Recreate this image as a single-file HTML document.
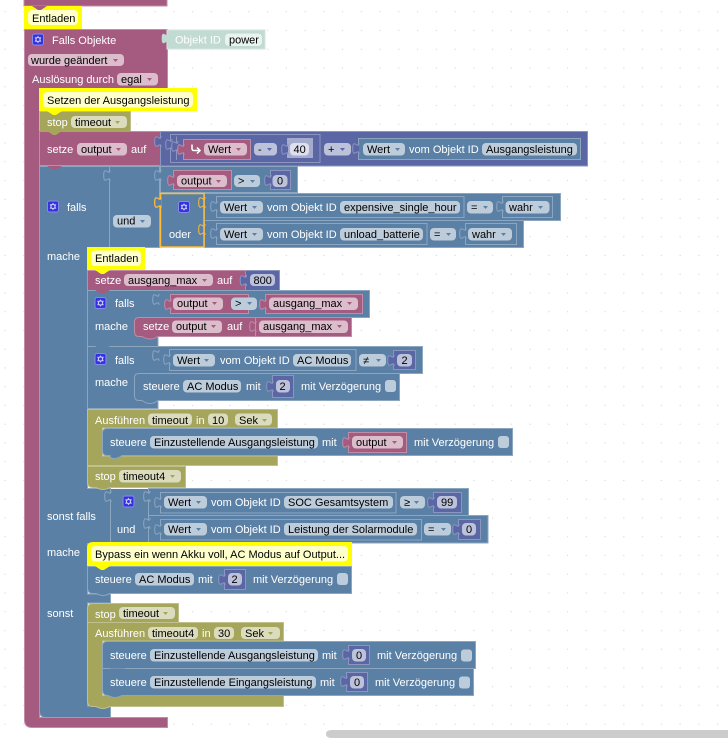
<!DOCTYPE html>
<html><head><meta charset="utf-8"><style>
html,body{margin:0;padding:0;background:#fff;width:728px;height:738px;overflow:hidden}
svg{display:block}
text{font:11px "Liberation Sans",sans-serif;fill:#000}
text.w{fill:#fff}
.p{fill:#a55b80;stroke:#c08ca6}.b{fill:#5b80a5;stroke:#8ca6c0}.o{fill:#a5a55b;stroke:#c0c08c}.m{fill:#5b67a5;stroke:#8c95c0}
.pn{fill:#a55b80}.bn{fill:#5b80a5}.on{fill:#a5a55b}.yn{fill:#ff0}.mn{fill:#5b67a5}
.fp{fill:#dbbdcc}.fb{fill:#bdccdb}.fo{fill:#dbdbbd}.fm{fill:#bdc2db}
.ap{fill:#a55b80}.ab{fill:#5b80a5}.ao{fill:#a5a55b}
</style></head><body>
<svg width="728" height="738" viewBox="0 0 728 738" xmlns="http://www.w3.org/2000/svg">
<defs>
<pattern id="dots" width="18.75" height="18.75" patternUnits="userSpaceOnUse"><rect x="4.6" y="11.2" width="1" height="1" fill="#ccc"/></pattern>
<g id="gear"><rect x=".5" y=".5" width="11" height="11" rx="2" fill="#3333dd" stroke="#8888ee"/><path d="M6 2.200l1.200 1.700 2.100-.1-.9 2.200.9 2.200-2.100-.1L6 9.800 4.800 8.100l-2.100.1.9-2.200-.9-2.200 2.100.1z" fill="#ccccf5"/><circle cx="6" cy="6" r="1.500" fill="#3333dd"/></g>
<path id="tab" d="M1 11c0-7-6.300 5.500-6.300-5.500s6.300 1.500 6.300-5.500"/>
<path id="notch" d="M0 0l6 4h3l6-4z"/>
<path id="dn" d="M0 0h5l-2.500 3z"/>
</defs>
<rect width="728" height="738" fill="#fff"/>
<rect width="728" height="738" fill="url(#dots)"/>

<!-- top stub -->
<rect class="p" x="24" y="-5" width="143" height="11"/>

<!-- main pink -->
<path class="p" d="M24.500 29.500H167.500V88.500H39.500V717.500H167.500V727.500H32q-7.500 0-7.500-7.500Z"/>

<!-- Objekt ID -->
<rect x="167" y="30" width="98" height="19" fill="#c1dad2" stroke="#d5e6e0"/>
<use href="#tab" x="167" y="33" fill="#c1dad2"/>
<text class="w" x="175" y="43.500">Objekt ID</text>
<rect x="225" y="33.500" width="37" height="12.500" rx="4" fill="#e9f3ef"/>
<text x="229" y="43.500">power</text>

<use href="#gear" x="32" y="33.500"/>
<text class="w" x="52" y="44">Falls Objekte</text>
<rect class="fp" x="28" y="54" width="96" height="12" rx="4"/>
<text x="31" y="64">wurde geändert</text><use href="#dn" x="113" y="59" class="ap"/>
<text class="w" x="32" y="83">Auslösung durch</text>
<rect class="fp" x="117" y="73" width="41" height="12.500" rx="4"/>
<text x="121" y="83">egal</text><use href="#dn" x="147" y="78" class="ap"/>

<!-- Entladen comment -->
<rect x="24" y="6" width="58" height="23" fill="#ff0"/>
<rect x="28" y="10" width="50" height="15" rx="4" fill="#ffc"/>
<text x="32" y="22">Entladen</text>
<use href="#notch" x="32" y="6" class="pn"/>

<!-- Setzen -->
<rect x="39" y="88" width="158" height="23" fill="#ff0"/>
<rect x="43" y="92" width="150" height="15.500" rx="4" fill="#ffc"/>
<text x="47" y="104">Setzen der Ausgangsleistung</text>

<!-- stop timeout -->
<rect class="o" x="39.500" y="111.500" width="91" height="20"/>
<text class="w" x="47" y="126">stop</text>
<rect class="fo" x="71" y="116" width="56" height="12" rx="4"/>
<text x="75" y="126">timeout</text><use href="#dn" x="115" y="121" class="ao"/>
<use href="#notch" x="47" y="111" class="yn"/>

<!-- setze output auf -->
<rect class="p" x="39.500" y="131.500" width="121" height="34"/>
<text class="w" x="47" y="153">setze</text>
<rect class="fp" x="77" y="143" width="50" height="12.500" rx="4"/>
<text x="81" y="153">output</text><use href="#dn" x="116" y="148" class="ap"/>
<text class="w" x="131" y="153">auf</text>
<use href="#notch" x="47" y="131" class="on"/>
<rect class="m" x="160.500" y="131.500" width="427" height="34.500"/>
<use href="#tab" x="160" y="136" class="m"/>
<rect class="m" x="170.500" y="134.500" width="149.500" height="28"/>
<use href="#tab" x="171" y="139" class="m"/>
<path d="M176.500 136.500V160" fill="none" stroke="#8c95c0"/>
<use href="#tab" x="177" y="141" class="m"/>
<rect class="p" x="183.500" y="139.500" width="67" height="20"/>
<use href="#tab" x="183" y="144" class="p"/>
<path d="M192 144.500v4q0 2 2 2h6m-3-3l3 3-3 3" fill="none" stroke="#fff" stroke-width="1.500"/>
<rect class="fp" x="204" y="143" width="43" height="12.500" rx="4"/>
<text x="208" y="153">Wert</text><use href="#dn" x="236" y="148" class="ap"/>
<rect class="fm" x="254" y="143" width="23" height="12.500" rx="4"/>
<text x="258" y="153">-</text><use href="#dn" x="267" y="148" class="mn"/>
<rect x="287" y="138" width="26" height="20" class="fm" opacity=".75"/>
<use href="#tab" x="287" y="144" class="m"/>
<rect x="290" y="143" width="19" height="12.500" rx="4" fill="#dee0ed"/>
<text x="293.500" y="153">40</text>
<rect class="fm" x="324" y="143" width="27" height="12.500" rx="4"/>
<text x="328" y="153">+</text><use href="#dn" x="340" y="148" class="mn"/>
<rect class="b" x="358.500" y="138.500" width="222" height="21"/>
<use href="#tab" x="358" y="143" class="m"/>
<rect class="fb" x="363" y="143" width="42" height="12.500" rx="4"/>
<text x="367" y="153">Wert</text><use href="#dn" x="395" y="148" class="ab"/>
<text class="w" x="409" y="153">vom Objekt ID</text>
<rect class="fb" x="482" y="143" width="95" height="12.500" rx="4"/>
<text x="486" y="153">Ausgangsleistung</text>

<!-- big blue if -->
<path class="b" d="M39.500 166.500H109.500V247.500H87.500V488.500H110.500V543.500H87.500V594H110.500V603H87.500V706H110.500V717.500H46q-6.500 0-6.500-6.500Z"/>
<use href="#notch" x="47" y="166" class="pn"/>
<use href="#gear" x="47" y="200.500"/>
<text class="w" x="67" y="211">falls</text>
<text class="w" x="47" y="260">mache</text>
<text class="w" x="47" y="520">sonst falls</text>
<text class="w" x="47" y="556">mache</text>
<text class="w" x="47" y="617">sonst</text>

<!-- und column -->
<rect class="b" x="109.500" y="166.500" width="50" height="81"/>
<use href="#tab" x="109" y="170" class="b"/>
<rect class="fb" x="113" y="215" width="38" height="12.500" rx="4"/>
<text x="117" y="224.500">und</text><use href="#dn" x="140" y="220" class="ab"/>
<!-- row output > 0 -->
<rect class="b" x="160.500" y="166.500" width="137" height="26"/>
<use href="#tab" x="160" y="170" class="b"/>
<rect class="p" x="173.500" y="170.500" width="58" height="19"/>
<use href="#tab" x="173" y="175" class="p"/>
<rect class="fp" x="177" y="175" width="50" height="12" rx="4"/>
<text x="181" y="184.500">output</text><use href="#dn" x="216" y="180" class="ap"/>
<rect class="fb" x="234" y="175" width="26" height="12" rx="4"/>
<text x="238" y="184.500">&gt;</text><use href="#dn" x="250" y="180" class="ab"/>
<rect class="m" x="270.500" y="170.500" width="20" height="19"/>
<use href="#tab" x="270" y="175" class="m"/>
<rect x="272.500" y="175" width="15" height="12" rx="4" class="fm"/>
<text x="277" y="184.500">0</text>

<!-- oder rows -->
<rect class="b" x="204.500" y="193.500" width="356" height="27"/>
<rect class="b" x="204.500" y="220.500" width="319" height="27"/>
<rect class="b" x="216.500" y="196.500" width="247.500" height="21"/>
<use href="#tab" x="216" y="201" class="b"/>
<rect class="fb" x="220" y="201" width="43" height="12.500" rx="4"/>
<text x="224" y="211">Wert</text><use href="#dn" x="252" y="206" class="ab"/>
<text class="w" x="267" y="211">vom Objekt ID</text>
<rect class="fb" x="340" y="201" width="120" height="12.500" rx="4"/>
<text x="344" y="211">expensive_single_hour</text>
<rect class="fb" x="467" y="201" width="26" height="12.500" rx="4"/>
<text x="471" y="211">=</text><use href="#dn" x="483" y="206" class="ab"/>
<rect class="b" x="502.500" y="196.500" width="50" height="21"/>
<use href="#tab" x="502" y="201" class="b"/>
<rect class="fb" x="505.500" y="201" width="44" height="12.500" rx="4"/>
<text x="509" y="211">wahr</text><use href="#dn" x="538" y="206" class="ab"/>
<rect class="b" x="216.500" y="223.500" width="210.500" height="21"/>
<use href="#tab" x="216" y="228" class="b"/>
<rect class="fb" x="220" y="228" width="43" height="12.500" rx="4"/>
<text x="224" y="238">Wert</text><use href="#dn" x="252" y="233" class="ab"/>
<text class="w" x="267" y="238">vom Objekt ID</text>
<rect class="fb" x="340" y="228" width="83" height="12.500" rx="4"/>
<text x="344" y="238">unload_batterie</text>
<rect class="fb" x="430" y="228" width="26" height="12.500" rx="4"/>
<text x="434" y="238">=</text><use href="#dn" x="446" y="233" class="ab"/>
<rect class="b" x="465.500" y="223.500" width="51" height="21"/>
<use href="#tab" x="465" y="228" class="b"/>
<rect class="fb" x="468" y="228" width="44" height="12.500" rx="4"/>
<text x="472" y="238">wahr</text><use href="#dn" x="501" y="233" class="ab"/>
<!-- oder selected -->
<rect x="160.500" y="193.500" width="43.500" height="53.500" fill="#5b80a5" stroke="#fb3" stroke-width="1.500"/>
<use href="#tab" x="160" y="197" fill="#5b80a5" stroke="#fb3" stroke-width="1.300"/>
<use href="#tab" x="204" y="197" fill="none" stroke="#fb3" stroke-width="1"/>
<use href="#tab" x="204" y="224" fill="none" stroke="#fb3" stroke-width="1"/>
<use href="#gear" x="178" y="201"/>
<text class="w" x="169" y="238">oder</text>

<!-- Entladen 2 -->
<rect x="87" y="247" width="58" height="23" fill="#ff0"/>
<rect x="91" y="250.500" width="50" height="15.500" rx="4" fill="#ffc"/>
<text x="95" y="262">Entladen</text>

<!-- setze ausgang_max -->
<rect class="p" x="87.500" y="270.500" width="158" height="20"/>
<use href="#notch" x="95" y="270" class="yn"/>
<text class="w" x="95" y="284">setze</text>
<rect class="fp" x="124" y="274" width="89" height="12" rx="4"/>
<text x="128" y="284">ausgang_max</text><use href="#dn" x="202" y="279" class="ap"/>
<text class="w" x="217" y="284">auf</text>
<rect class="m" x="245.500" y="270.500" width="34" height="20"/>
<use href="#tab" x="245.500" y="275" class="m"/>
<rect class="fm" x="250" y="274" width="25" height="12" rx="4"/>
<text x="253.500" y="284">800</text>

<!-- falls 1 -->
<path class="b" d="M87.500 290.500H369.500V317.500H158V346.500H87.500Z"/>
<use href="#notch" x="95" y="290" class="pn"/>
<use href="#gear" x="94.500" y="297"/>
<text class="w" x="115" y="307">falls</text>
<text class="w" x="95" y="330">mache</text>
<use href="#tab" x="158" y="294" fill="none" stroke="#8ca6c0"/>
<rect class="p" x="170.500" y="294.500" width="78" height="19"/>
<use href="#tab" x="170" y="299" class="p"/>
<rect class="fp" x="173" y="297.500" width="50" height="12.500" rx="4"/>
<text x="177" y="307">output</text><use href="#dn" x="212" y="302" class="ap"/>
<rect class="fb" x="231" y="297.500" width="26" height="12.500" rx="4"/>
<text x="235" y="307">&gt;</text><use href="#dn" x="247" y="302" class="ab"/>
<rect class="p" x="265.500" y="294.500" width="97" height="19"/>
<use href="#tab" x="265" y="299" class="p"/>
<rect class="fp" x="269" y="297.500" width="89" height="12.500" rx="4"/>
<text x="273" y="307">ausgang_max</text><use href="#dn" x="347" y="302" class="ap"/>
<!-- setze output inner -->
<rect x="158.500" y="318" width="212" height="28" fill="#fff"/>
<rect x="158.500" y="318" width="212" height="28" fill="url(#dots)"/>
<path class="p" d="M139 317.500H351.500V336.500H158q-4 2.500-8 2.500t-8-2.500h-3q-4.500 0-4.500-4.500V322q0-4.500 4.500-4.500Z"/>
<text class="w" x="143" y="330">setze</text>
<rect class="fp" x="172" y="320.500" width="50" height="12.500" rx="4"/>
<text x="176" y="330">output</text><use href="#dn" x="211" y="325" class="ap"/>
<text class="w" x="227" y="330">auf</text>
<path d="M255.500 318v18" stroke="#c08ca6"/>
<use href="#tab" x="255" y="321" fill="none" stroke="#c08ca6"/>
<rect class="fp" x="259" y="320.500" width="89" height="12.500" rx="4"/>
<text x="263" y="330">ausgang_max</text><use href="#dn" x="337" y="325" class="ap"/>

<!-- falls 2 -->
<path class="b" d="M87.500 346.500H422.500V373.500H158V408.500H87.500Z"/>
<use href="#notch" x="95" y="346" class="bn"/>
<use href="#gear" x="94.500" y="353"/>
<text class="w" x="115" y="364">falls</text>
<text class="w" x="95" y="386">mache</text>
<use href="#tab" x="158" y="350" fill="none" stroke="#8ca6c0"/>
<rect class="b" x="169.500" y="349.500" width="186.500" height="21"/>
<use href="#tab" x="169" y="354" class="b"/>
<rect class="fb" x="173" y="354" width="42" height="12.500" rx="4"/>
<text x="177" y="364">Wert</text><use href="#dn" x="204" y="359" class="ab"/>
<text class="w" x="220" y="364">vom Objekt ID</text>
<rect class="fb" x="293" y="354" width="58" height="12.500" rx="4"/>
<text x="297" y="364">AC Modus</text>
<rect class="fb" x="359" y="354" width="27" height="12.500" rx="4"/>
<text x="363" y="364">≠</text><use href="#dn" x="376" y="359" class="ab"/>
<rect class="m" x="393.500" y="350.500" width="22" height="19"/>
<use href="#tab" x="393" y="355" class="m"/>
<rect class="fm" x="397" y="354" width="15" height="12.500" rx="4"/>
<text x="401.500" y="364">2</text>
<rect x="158.500" y="374" width="265" height="28" fill="#fff"/>
<rect x="158.500" y="374" width="265" height="28" fill="url(#dots)"/>
<path class="b" d="M139 373.500H399.500V400.500H158q-4 3-8 3t-8-3h-3q-4.500 0-4.500-4.500V378q0-4.500 4.500-4.500Z"/>
<text class="w" x="143" y="390">steuere</text>
<rect class="fb" x="183" y="380" width="58" height="12.500" rx="4"/>
<text x="187" y="390">AC Modus</text>
<text class="w" x="246" y="390">mit</text>
<rect class="m" x="272.500" y="375.500" width="21" height="22"/>
<use href="#tab" x="272" y="381" class="m"/>
<rect class="fm" x="276" y="380" width="14" height="12.500" rx="4"/>
<text x="279.500" y="390">2</text>
<text class="w" x="301" y="390">mit Verzögerung</text>
<rect class="fb" x="385" y="380" width="11" height="12" rx="3"/>

<!-- Ausfuhren 10 -->
<path class="o" d="M87.500 409.500H277.500V428H102.500V456H277.500V465.500H87.500Z"/>
<text class="w" x="95" y="424">Ausführen</text>
<rect class="fo" x="148" y="413.500" width="44" height="12" rx="4"/>
<text x="152" y="424">timeout</text>
<text class="w" x="196" y="424">in</text>
<rect class="fo" x="208" y="413.500" width="20" height="12" rx="4"/>
<text x="212" y="424">10</text>
<rect class="fo" x="235" y="413.500" width="37" height="12" rx="4"/>
<text x="239" y="424">Sek</text><use href="#dn" x="262" y="419" class="ao"/>
<path class="b" d="M107 428.500H512.500V455.500H122q-4 3-8 3t-4-3h-3q-4.500 0-4.500-4.500V433q0-4.500 4.500-4.500Z"/>
<text class="w" x="110" y="446">steuere</text>
<rect class="fb" x="150" y="436" width="168" height="12.500" rx="4"/>
<text x="154" y="446">Einzustellende Ausgangsleistung</text>
<text class="w" x="322" y="446">mit</text>
<rect class="p" x="348.500" y="432.500" width="58" height="20"/>
<use href="#tab" x="348" y="437" class="p"/>
<rect class="fp" x="352" y="436" width="51" height="12.500" rx="4"/>
<text x="356" y="446">output</text><use href="#dn" x="392" y="441" class="ap"/>
<text class="w" x="414" y="446">mit Verzögerung</text>
<rect class="fb" x="498" y="436" width="11" height="12" rx="3"/>

<!-- stop timeout4 -->
<path class="o" d="M87.500 466.500H185.500V487.500H110q-4 2-7 2t-7-2H93q-5.500 0-5.500-5.500Z"/>
<text class="w" x="95" y="480">stop</text>
<rect class="fo" x="119" y="470" width="62" height="12.500" rx="4"/>
<text x="123" y="480">timeout4</text><use href="#dn" x="170" y="475" class="ao"/>

<!-- sonst falls inner -->
<rect class="bn" x="110" y="489" width="38" height="54"/>
<rect class="b" x="148.500" y="488.500" width="320" height="27"/>
<rect class="b" x="148.500" y="515.500" width="339.500" height="27.500"/>
<path d="M110.500 489V543" stroke="#8ca6c0"/>
<use href="#tab" x="110" y="491" class="b"/>
<use href="#tab" x="149" y="491" class="b"/>
<use href="#tab" x="149" y="518" class="b"/>
<use href="#gear" x="122.500" y="495.500"/>
<text class="w" x="117" y="533">und</text>
<rect class="b" x="160.500" y="492.500" width="235.500" height="20.500"/>
<use href="#tab" x="160" y="497" class="b"/>
<rect class="fb" x="164" y="496" width="43" height="12.500" rx="4"/>
<text x="168" y="506">Wert</text><use href="#dn" x="196" y="501" class="ab"/>
<text class="w" x="211" y="506">vom Objekt ID</text>
<rect class="fb" x="284" y="496" width="109" height="12.500" rx="4"/>
<text x="288" y="506">SOC Gesamtsystem</text>
<rect class="fb" x="400" y="496" width="25" height="12.500" rx="4"/>
<text x="404" y="506">≥</text><use href="#dn" x="414" y="501" class="ab"/>
<rect class="m" x="433.500" y="492.500" width="28" height="20"/>
<use href="#tab" x="433" y="497" class="m"/>
<rect class="fm" x="437" y="496" width="20" height="12.500" rx="4"/>
<text x="441" y="506">99</text>
<rect class="b" x="160.500" y="519.500" width="261" height="20.500"/>
<use href="#tab" x="160" y="524" class="b"/>
<rect class="fb" x="164" y="523" width="43" height="12.500" rx="4"/>
<text x="168" y="533">Wert</text><use href="#dn" x="196" y="528" class="ab"/>
<text class="w" x="211" y="533">vom Objekt ID</text>
<rect class="fb" x="284" y="523" width="133" height="12.500" rx="4"/>
<text x="288" y="533">Leistung der Solarmodule</text>
<rect class="fb" x="424" y="523" width="27" height="12.500" rx="4"/>
<text x="428" y="533">=</text><use href="#dn" x="441" y="528" class="ab"/>
<rect class="m" x="458.500" y="519.500" width="22" height="20"/>
<use href="#tab" x="458" y="524" class="m"/>
<rect class="fm" x="462" y="523" width="14" height="12.500" rx="4"/>
<text x="466" y="533">0</text>

<!-- Bypass -->
<path d="M93 542H352V566H87V548q0-6 6-6Z" fill="#ff0"/>
<rect x="91" y="546" width="257" height="15.500" rx="4" fill="#ffc"/>
<text x="95" y="558">Bypass ein wenn Akku voll, AC Modus auf Output...</text>
<!-- steuere AC -->
<path class="b" d="M87.500 566.500H351.500V593.500H110q-4 2-7 2t-7-2H93q-5.500 0-5.500-5.500Z"/>
<use href="#notch" x="95" y="566" class="yn"/>
<text class="w" x="95" y="583">steuere</text>
<rect class="fb" x="135" y="573" width="59" height="12.500" rx="4"/>
<text x="139" y="583">AC Modus</text>
<text class="w" x="198" y="583">mit</text>
<rect class="m" x="224.500" y="569.500" width="21" height="20"/>
<use href="#tab" x="224" y="574" class="m"/>
<rect class="fm" x="228" y="573" width="14" height="12.500" rx="4"/>
<text x="231.500" y="583">2</text>
<text class="w" x="253" y="583">mit Verzögerung</text>
<rect class="fb" x="337" y="573" width="11" height="12" rx="3"/>

<!-- sonst olive -->
<path class="o" d="M93 603.500H178.500V622.500H87.500V609q0-5.500 5.500-5.500Z"/>
<text class="w" x="95" y="618">stop</text>
<rect class="fo" x="119" y="607" width="56" height="12" rx="4"/>
<text x="123" y="617">timeout</text><use href="#dn" x="163" y="612" class="ao"/>
<path class="o" d="M87.500 622.500H283.500V641H102.500V695.500H283.500V706.500H110q-4 2-7 2t-7-2H93q-5.500 0-5.500-5.500Z"/>
<text class="w" x="95" y="637">Ausführen</text>
<rect class="fo" x="148" y="627" width="50" height="12" rx="4"/>
<text x="152" y="637">timeout4</text>
<text class="w" x="202" y="637">in</text>
<rect class="fo" x="214" y="627" width="20" height="12" rx="4"/>
<text x="218" y="637">30</text>
<rect class="fo" x="241" y="627" width="39" height="12" rx="4"/>
<text x="245" y="637">Sek</text><use href="#dn" x="268" y="632" class="ao"/>
<path class="b" d="M107 641.500H475.500V668.500H102.500V646q0-4.500 4.500-4.500Z"/>
<path class="b" d="M102.500 668.500H473.500V695.500H122q-4 2-7 2t-7-2q-5.500 0-5.500-5.500Z"/>
<use href="#notch" x="110" y="668.500" class="bn"/>
<text class="w" x="110" y="659">steuere</text>
<rect class="fb" x="150" y="649" width="168" height="12.500" rx="4"/>
<text x="154" y="659">Einzustellende Ausgangsleistung</text>
<text class="w" x="322" y="659">mit</text>
<rect class="m" x="348.500" y="645.500" width="21" height="19"/>
<use href="#tab" x="348" y="649" class="m"/>
<rect class="fm" x="352" y="649" width="14" height="12.500" rx="4"/>
<text x="356" y="659">0</text>
<text class="w" x="377" y="659">mit Verzögerung</text>
<rect class="fb" x="461" y="649.500" width="11" height="12" rx="3"/>
<text class="w" x="110" y="686">steuere</text>
<rect class="fb" x="150" y="676" width="166" height="12.500" rx="4"/>
<text x="154" y="686">Einzustellende Eingangsleistung</text>
<text class="w" x="320" y="686">mit</text>
<rect class="m" x="346.500" y="672.500" width="21" height="19"/>
<use href="#tab" x="346" y="676" class="m"/>
<rect class="fm" x="350" y="676" width="14" height="12.500" rx="4"/>
<text x="354" y="686">0</text>
<text class="w" x="375" y="686">mit Verzögerung</text>
<rect class="fb" x="459" y="676.500" width="11" height="12" rx="3"/>

<!-- scrollbar -->
<path d="M332 730H728V738H332q-6 0-6-4t6-4Z" fill="#ccc"/>
</svg>
</body></html>
